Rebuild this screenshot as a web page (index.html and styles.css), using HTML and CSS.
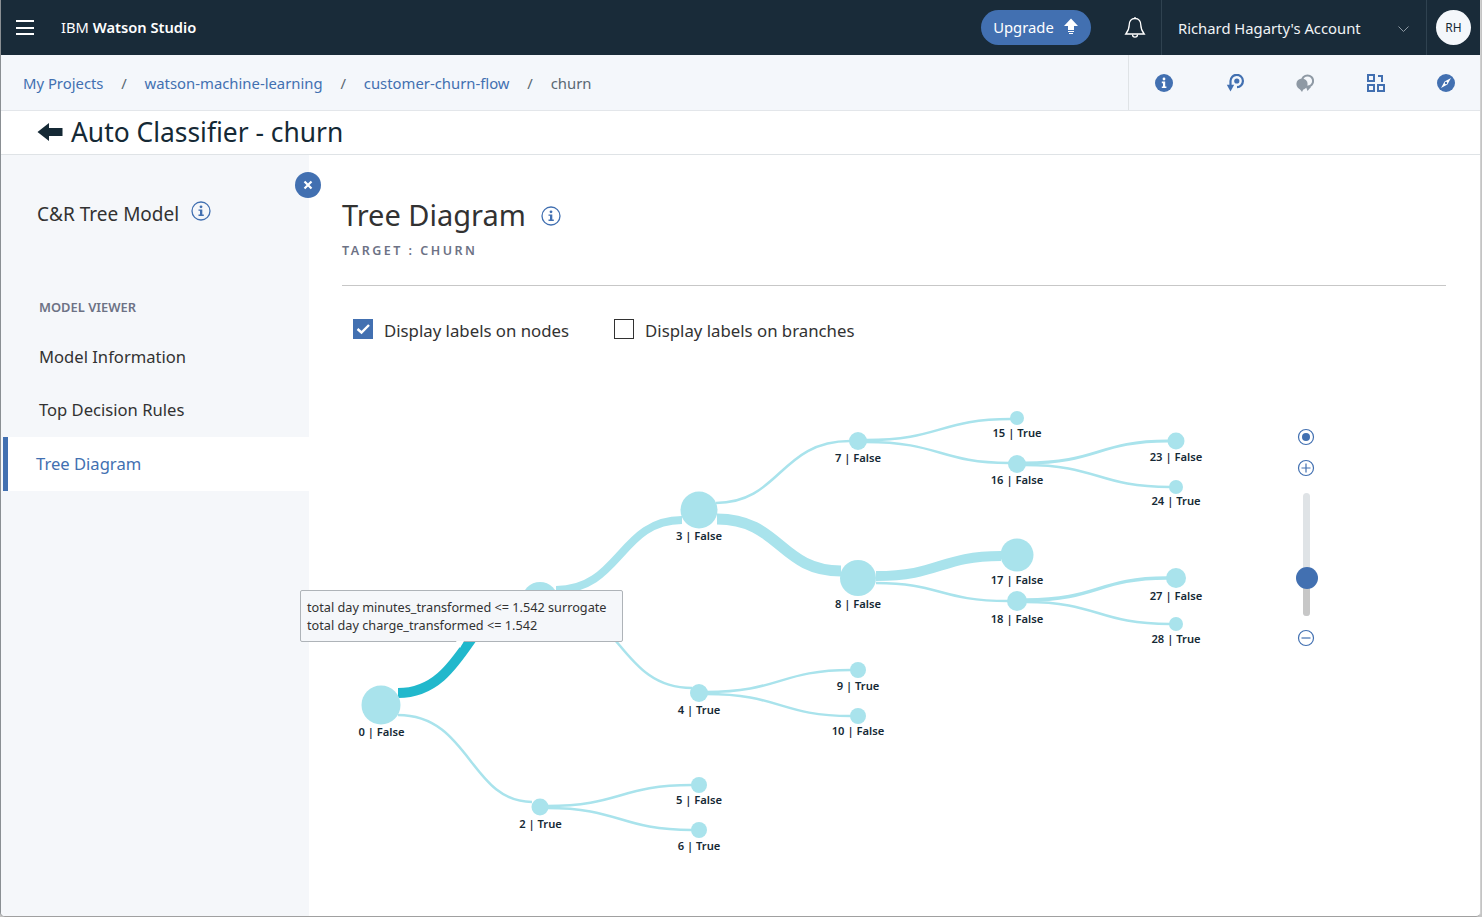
FILE: index.html
```html
<!DOCTYPE html>
<html lang="en">
<head>
<meta charset="utf-8">
<title>Auto Classifier - churn</title>
<link rel="stylesheet" href="styles.css">
</head>
<body>
<div class="app">
  <header class="topbar">
    <button class="burger" aria-label="Menu"><span></span><span></span><span></span></button>
    <div class="brand">IBM <b>Watson Studio</b></div>
    <div class="top-right">
      <div class="upgrade">Upgrade
        <svg width="16" height="18" viewBox="0 0 16 18"><path d="M8 0.5 15 8H11V12H5V8H1Z" fill="#fff"/><path d="M5 13.5H11M6 15.5H10" stroke="#fff" stroke-width="1.2"/></svg>
      </div>
      <div class="bell">
        <svg width="22" height="24" viewBox="0 0 22 24" fill="none" stroke="#fff" stroke-width="1.3"><path d="M11 2.5C7 2.5 5.2 5.5 5.2 9C5.2 13.5 3.8 15.5 1.8 18H20.2C18.2 15.5 16.8 13.500 16.8 9C16.8 5.5 15 2.5 11 2.5Z"/><path d="M8.5 18.5C8.5 22 13.5 22 13.5 18.5"/><path d="M11 1V2.5"/></svg>
      </div>
      <div class="account">
        <span>Richard Hagarty's Account</span>
        <svg class="chev" width="11" height="7" viewBox="0 0 11 7" fill="none" stroke="#8d99a3" stroke-width="1"><path d="M0.5 0.5 5.5 5.5 10.5 0.5"/></svg>
      </div>
      <div class="avatar-cell"><div class="avatar">RH</div></div>
    </div>
  </header>

  <nav class="crumbs">
    <div class="crumb-list">
      <a>My Projects</a><i>/</i><a>watson-machine-learning</a><i>/</i><a>customer-churn-flow</a><i>/</i><span>churn</span>
    </div>
    <div class="tools">
      <svg width="18" height="18" viewBox="0 0 18 18"><circle cx="9" cy="9" r="9" fill="#4270b1"/><circle cx="9" cy="5" r="1.4" fill="#fff"/><path d="M6.8 7.6H10.2V12.4H11.4V14H6.8V12.4H8V9.2H6.8Z" fill="#fff"/></svg>
      <svg width="18" height="18" viewBox="0 0 18 18" fill="none"><path d="M4.500 11V7A6.200 6.200 0 1 1 11 13.200" stroke="#4270b1" stroke-width="2.200"/><circle cx="10.800" cy="7" r="2.600" fill="#4270b1"/><path d="M0.800 10.800H8.200L4.500 17.500Z" fill="#4270b1"/></svg>
      <svg width="18" height="18" viewBox="0 0 18 18" fill="none"><circle cx="11.500" cy="7" r="5.600" stroke="#8e99a4" stroke-width="2"/><circle cx="6" cy="10" r="5.600" fill="#8e99a4"/><path d="M3 14H8L6 18Z" fill="#8e99a4"/><path d="M10 13H15L11.500 17Z" fill="#8e99a4"/></svg>
      <svg width="18" height="18" viewBox="0 0 18 18" fill="none" stroke="#4270b1" stroke-width="2"><rect x="1" y="1" width="6" height="6"/><rect x="1" y="11" width="6" height="6"/><rect x="11" y="11" width="6" height="6"/><path d="M11 2H15V8"/></svg>
      <svg width="18" height="18" viewBox="0 0 18 18"><circle cx="9" cy="9" r="9" fill="#4270b1"/><path d="M14 4 10.4 10.4 4 14 7.600 7.600Z" fill="#fff"/><circle cx="9" cy="9" r="1.200" fill="#4270b1"/></svg>
    </div>
  </nav>

  <div class="page-title">
    <svg width="26" height="20" viewBox="0 0 26 20"><path d="M0.500 10 12 1V6H25.500V14H12V19Z" fill="#152935"/></svg>
    <h1>Auto Classifier - churn</h1>
  </div>

  <div class="body">
    <aside class="side">
      <button class="close" aria-label="Close"><svg width="10" height="10" viewBox="0 0 10 10" stroke="#fff" stroke-width="2.2"><path d="M1.500 1.500 8.500 8.500M8.500 1.500 1.500 8.500"/></svg></button>
      <div class="model">C&amp;R Tree Model
        <svg class="info" width="20" height="20" viewBox="0 0 20 20"><use href="#i-info"/></svg>
      </div>
      <div class="side-label">MODEL VIEWER</div>
      <a class="side-item">Model Information</a>
      <a class="side-item">Top Decision Rules</a>
      <a class="side-item active">Tree Diagram</a>
    </aside>

    <main class="main">
      <div class="main-head">
        <div class="main-title"><h2>Tree Diagram</h2>
          <svg class="info" width="20" height="20" viewBox="0 0 20 20">
            <symbol id="i-info" viewBox="0 0 20 20"><circle cx="10" cy="10" r="9" fill="none" stroke="#4270b1" stroke-width="1.300"/><circle cx="10" cy="5.800" r="1.400" fill="#4270b1"/><path d="M7.500 8.400H11.300V13.600H12.800V15H7.500V13.600H9V9.800H7.500Z" fill="#4270b1"/></symbol>
            <use href="#i-info"/>
          </svg>
        </div>
        <div class="target">TARGET : CHURN</div>
      </div>

      <div class="checks">
        <label class="check"><span class="box on"><svg width="20" height="20" viewBox="0 0 20 20"><path d="M4.500 10 8.500 13.500 16 6" fill="none" stroke="#fff" stroke-width="2.400"/></svg></span>Display labels on nodes</label>
        <label class="check second"><span class="box"></span>Display labels on branches</label>
      </div>

      <div class="canvas">
        <svg class="tree" width="1173" height="762" viewBox="309 155 1173 762">
          <g class="links" fill="none" stroke="#a9e3ec">
            <path stroke-width="2.500" d="M398 715C470 715 470 802 532 802"/>
            <path stroke-width="8" d="M556 590C620 590 620 520 682 520"/>
            <path stroke-width="2.500" d="M556 606C620 606 620 688 692 688"/>
            <path stroke-width="2.500" d="M547 806C620 806 620 785 692 785"/>
            <path stroke-width="2.500" d="M547 808C620 808 620 830 692 830"/>
            <path stroke-width="2.500" d="M716 503C780 503 780 441 850 441"/>
            <path stroke-width="11" d="M717 519C780 519 780 571 841 571"/>
            <path stroke-width="2.500" d="M706 692C780 692 780 670 851 670"/>
            <path stroke-width="2.500" d="M706 694C780 694 780 716 851 716"/>
            <path stroke-width="2.500" d="M866 440C940 440 940 419 1011 419"/>
            <path stroke-width="2.500" d="M866 442C940 442 940 463 1009 463"/>
            <path stroke-width="10" d="M876 576C940 576 940 556 1001 556"/>
            <path stroke-width="2.500" d="M876 583C940 583 940 601 1008 601"/>
            <path stroke-width="3" d="M1025 463C1098 463 1098 441 1168 441"/>
            <path stroke-width="2.500" d="M1025 465C1098 465 1098 487 1170 487"/>
            <path stroke-width="3.500" d="M1026 600C1098 600 1098 578 1167 578"/>
            <path stroke-width="2.500" d="M1026 602C1098 602 1098 624 1170 624"/>
          </g>
          <path class="hot" fill="none" stroke="#21b8cc" stroke-width="10" d="M398 693C441.200 693 458.500 655.900 480.500 626.300"/>
          <g class="nodes" fill="#a9e3ec">
            <circle cx="381" cy="705" r="19.500"/><circle cx="540" cy="600" r="18"/><circle cx="540" cy="807" r="8.500"/>
            <circle cx="699" cy="510" r="18.500"/><circle cx="699" cy="693" r="9"/><circle cx="699" cy="785" r="8"/><circle cx="699" cy="830" r="8"/>
            <circle cx="858" cy="441" r="9"/><circle cx="858" cy="578" r="18"/><circle cx="858" cy="670" r="8"/><circle cx="858" cy="716" r="8"/>
            <circle cx="1017" cy="418" r="7"/><circle cx="1017" cy="464" r="9"/><circle cx="1017" cy="555" r="16.500"/><circle cx="1017" cy="601" r="10"/>
            <circle cx="1176" cy="441" r="8.500"/><circle cx="1176" cy="487" r="7"/><circle cx="1176" cy="578" r="10"/><circle cx="1176" cy="624" r="7"/>
          </g>
          <g class="labels">
            <text x="381.500" y="736">0 | False</text><text x="540.500" y="828">2 | True</text>
            <text x="699" y="540">3 | False</text><text x="699" y="714">4 | True</text><text x="699" y="804">5 | False</text><text x="699" y="850">6 | True</text>
            <text x="858" y="462">7 | False</text><text x="858" y="608">8 | False</text><text x="858" y="690">9 | True</text><text x="858" y="735">10 | False</text>
            <text x="1017" y="437">15 | True</text><text x="1017" y="484">16 | False</text><text x="1017" y="584">17 | False</text><text x="1017" y="623">18 | False</text>
            <text x="1176" y="461">23 | False</text><text x="1176" y="505">24 | True</text><text x="1176" y="600">27 | False</text><text x="1176" y="643">28 | True</text>
          </g>
        </svg>

        <div class="tip">total day minutes_transformed &lt;= 1.542 surrogate<br>total day charge_transformed &lt;= 1.542</div>

        <div class="zoom">
          <svg width="18" height="18" viewBox="0 0 18 18" fill="none" stroke="#4270b1" stroke-width="1.200"><circle cx="9" cy="9" r="7.500"/><circle cx="9" cy="9" r="4" fill="#4270b1" stroke="none"/></svg>
          <svg class="z-plus" width="18" height="18" viewBox="0 0 18 18" fill="none" stroke="#4270b1" stroke-width="1.200"><circle cx="9" cy="9" r="7.500"/><path d="M4.500 9H13.500M9 4.500V13.500"/></svg>
          <div class="track"><div class="track-low"></div><div class="thumb"></div></div>
          <svg class="z-minus" width="18" height="18" viewBox="0 0 18 18" fill="none" stroke="#4270b1" stroke-width="1.200"><circle cx="9" cy="9" r="7.500"/><path d="M4.500 9H13.500"/></svg>
        </div>
      </div>
    </main>
  </div>
</div>
</body>
</html>
```

FILE: styles.css
```css
* { box-sizing: border-box; }
html, body { margin: 0; height: 100%; }
body {
  background: #c4c4c4;
  font-family: "Noto Sans", "Open Sans", sans-serif;
  color: #152935;
  overflow: hidden;
}
.app {
  width: 1481px;
  height: 917px;
  display: flex;
  flex-direction: column;
  background: #fff;
  border-left: 1px solid #8a8f93;
  border-right: 1px solid #d0d0d0;
  border-bottom: 1px solid #a0a0a0;
  border-radius: 0 0 5px 5px;
  overflow: hidden;
}
.topbar {
  height: 55px;
  flex: none;
  background: #192b39;
  color: #fff;
  display: flex;
  align-items: center;
}
.burger {
  width: 18px;
  height: 15px;
  margin-left: 15px;
  padding: 0;
  border: 0;
  background: none;
  display: flex;
  flex-direction: column;
  justify-content: space-between;
}
.burger span { display: block; height: 2px; background: #fff; }
.brand { margin-left: 27px; padding-bottom: 2px; font-size: 14.700px; }
.brand b { font-weight: 600; }
.top-right { margin-left: auto; display: flex; align-items: center; height: 55px; }
.upgrade {
  width: 110px;
  height: 35px;
  padding-bottom: 1px;
  border-radius: 18px;
  background: #4270b1;
  font-size: 14.800px;
  display: flex;
  align-items: center;
  justify-content: center;
  gap: 9px;
}
.bell { width: 70px; padding-right: 15px; display: flex; justify-content: flex-end; }
.account {
  width: 266px;
  height: 55px;
  padding: 0 17px 0 16px;
  border-left: 1px solid #2f4250;
  border-right: 1px solid #2f4250;
  display: flex;
  align-items: center;
  justify-content: space-between;
  font-size: 14.800px;
  color: #f0f3f5;
}
.chev { margin-top: 3px; }
.avatar-cell { width: 53px; display: flex; justify-content: center; }
.avatar {
  width: 35px;
  height: 35px;
  border-radius: 50%;
  background: #f4f7fb;
  color: #152935;
  font-size: 12px;
  display: flex;
  align-items: center;
  justify-content: center;
}
.crumbs {
  height: 56px;
  flex: none;
  background: #f4f7fb;
  border-bottom: 1px solid #e3e6ea;
  display: flex;
  align-items: stretch;
  justify-content: space-between;
  font-size: 14.850px;
}
.crumb-list { display: flex; align-items: center; padding-left: 22px; }
.crumb-list a { color: #4270b1; }
.crumb-list i { font-style: normal; color: #5a6872; margin: 0 17.800px; }
.crumb-list span { color: #5a6872; }
.tools {
  width: 352px;
  border-left: 1px solid #dfe3e6;
  display: flex;
  align-items: center;
  justify-content: space-between;
  padding: 0 25px 0 26px;
}
.page-title {
  height: 44px;
  flex: none;
  padding-bottom: 2px;
  border-bottom: 1px solid #dfe3e6;
  display: flex;
  align-items: center;
  gap: 8px;
  padding-left: 36px;
}
.page-title h1 { margin: 0; font-size: 26.400px; font-weight: 400; color: #152935; }
.body { flex: 1; display: flex; min-height: 0; }
.side {
  width: 308px;
  flex: none;
  background: #f5f7fa;
  position: relative;
  padding-top: 46px;
}
.close {
  position: absolute;
  right: -12px;
  top: 17px;
  width: 26px;
  height: 26px;
  border: 0;
  padding: 0;
  border-radius: 50%;
  background: #4270b1;
  display: flex;
  align-items: center;
  justify-content: center;
  z-index: 2;
}
.model {
  display: flex;
  align-items: flex-start;
  gap: 12px;
  padding-left: 36px;
  font-size: 19px;
  color: #323232;
  height: 96px;
}
.info { flex: none; }
.side-label {
  padding-left: 38px;
  font-size: 12.900px;
  font-weight: 600;
  color: #6d7285;
  height: 32px;
  margin-top: 1px;
}
.side-item {
  display: flex;
  align-items: center;
  height: 53px;
  padding-left: 38px;
  font-size: 16.600px;
  color: #323232;
}
.side-item.active {
  height: 54px;
  margin-top: 1px;
  margin-left: 2px;
  padding-left: 28px;
  padding-bottom: 2px;
  border-left: 5px solid #4270b1;
  background: #fff;
  color: #4270b1;
}
.main { flex: 1; min-width: 0; position: relative; padding: 0 34px 0 33px; }
.main-head { margin-top: 35px; height: 96px; border-bottom: 1px solid #c7c7c7; }
.main-title { display: flex; align-items: center; gap: 15px; height: 48px; }
.main-title h2 { margin: 0; font-size: 29px; font-weight: 400; color: #323232; }
.main-title .info { margin-top: 4px; }
.target { margin-top: 4px; font-size: 12.500px; font-weight: 600; letter-spacing: 2.500px; color: #6d7285; }
.checks { display: flex; margin-top: 33px; padding-left: 11px; font-size: 16.800px; color: #323232; }
.check { display: flex; align-items: center; gap: 11px; }
.check.second { margin-left: 45px; }
.box { width: 20px; height: 20px; margin: -1px 0 3px; border: 1px solid #323232; background: #fff; display: block; }
.box svg { display: block; }
.box.on { border: 0; background: #4270b1; }
.canvas { position: absolute; inset: 0; pointer-events: none; }
.tree { position: absolute; left: 0; top: 0; }
.labels text { font-size: 11.200px; font-weight: 600; text-anchor: middle; fill: #152935; }
.tip {
  position: absolute;
  left: -9px;
  top: 435px;
  width: 323px;
  height: 52px;
  padding: 7px 6px;
  background: #f5f7fa;
  border: 1px solid #aeb3b8;
  border-radius: 2px;
  font-size: 12.700px;
  line-height: 18px;
  color: #323232;
  white-space: nowrap;
  z-index: 3;
}
.tip::after {
  content: "";
  position: absolute;
  left: 155px;
  bottom: -7px;
  border-left: 4px solid transparent;
  border-right: 4px solid transparent;
  border-top: 7px solid #fff;
}
.zoom {
  position: absolute;
  left: 987px;
  top: 273px;
  width: 20px;
  display: flex;
  flex-direction: column;
  align-items: center;
}
.z-plus { margin-top: 13px; }
.track {
  position: relative;
  width: 7px;
  height: 123px;
  margin-top: 16px;
  margin-left: 1px;
  border-radius: 4px;
  background: #dfe3e6;
  overflow: visible;
}
.track-low { position: absolute; left: 0; right: 0; bottom: 0; height: 38px; border-radius: 0 0 4px 4px; background: #c7c7c7; }
.thumb { position: absolute; left: -7.500px; top: 74px; width: 22px; height: 22px; border-radius: 50%; background: #4270b1; }
.z-minus { margin-top: 13px; }
```
